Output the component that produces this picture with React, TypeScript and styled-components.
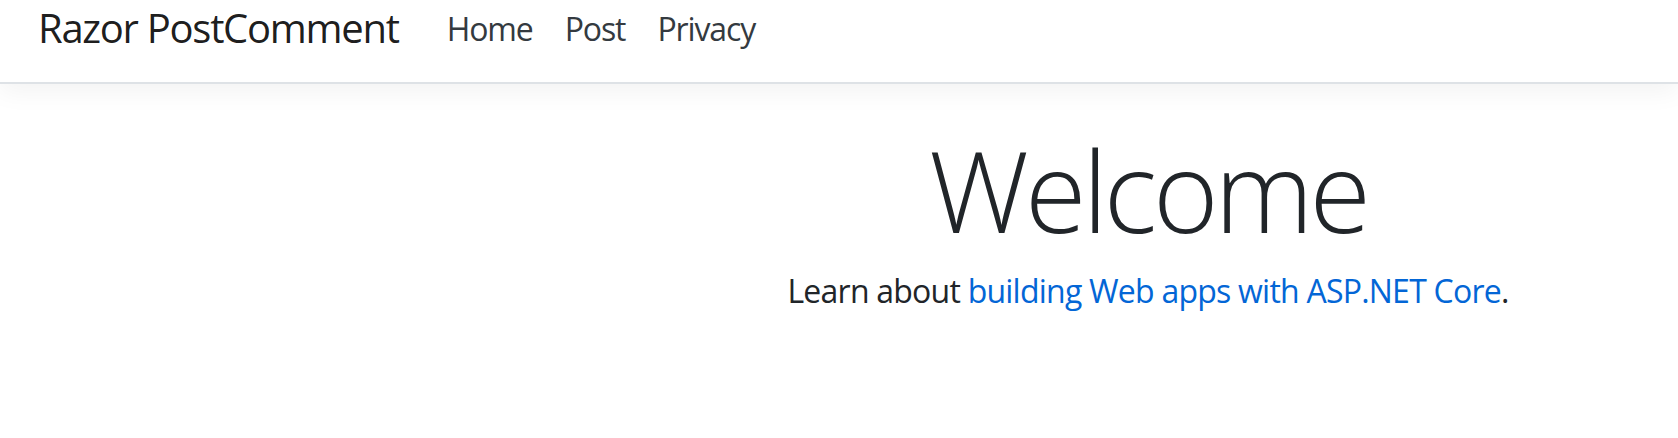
import styled, { createGlobalStyle } from "styled-components";

const GlobalStyle = createGlobalStyle`
  html, body {
    margin: 0;
    padding: 0;
    background: #ffffff;
    font-family: "Open Sans", "Noto Sans", Arial, sans-serif;
    color: #212529;
  }
  * {
    box-sizing: border-box;
  }
`;

const Header = styled.header`
  height: 84px;
  background: #ffffff;
  border-bottom: 2px solid #dee2e6;
  box-shadow: 0 8px 24px rgba(0, 0, 0, 0.05);
`;

const NavBar = styled.nav`
  display: flex;
  align-items: flex-start;
  padding-left: 38px;
`;

const Brand = styled.a`
  font-size: 40px;
  line-height: 56px;
  letter-spacing: -0.032em;
  color: rgba(0, 0, 0, 0.9);
  text-decoration: none;
  margin-right: 32px;
  white-space: nowrap;
`;

const NavList = styled.ul`
  display: flex;
  list-style: none;
  margin: 0;
  padding: 0;
`;

const NavLink = styled.a`
  display: block;
  font-size: 32px;
  line-height: 57px;
  letter-spacing: -0.035em;
  padding: 0 16px;
  color: #343a40;
  text-decoration: none;
`;

const Main = styled.main`
  padding-left: 618px;
`;

const Hero = styled.div`
  text-align: center;
  padding-top: 39px;
`;

const Title = styled.h1`
  margin: 0 0 10px;
  font-size: 112px;
  font-weight: 300;
  line-height: 1.2;
  letter-spacing: -0.036em;
  color: #212529;
`;

const Lead = styled.p`
  margin: 0;
  font-size: 32px;
  line-height: 48px;
  letter-spacing: -0.024em;
  color: #212529;
`;

const Link = styled.a`
  color: #0366d6;
  text-decoration: none;
`;

export default function App() {
  return (
    <>
      <GlobalStyle />
      <Header>
        <NavBar>
          <Brand href="#">Razor PostComment</Brand>
          <NavList>
            <li>
              <NavLink href="#">Home</NavLink>
            </li>
            <li>
              <NavLink href="#">Post</NavLink>
            </li>
            <li>
              <NavLink href="#">Privacy</NavLink>
            </li>
          </NavList>
        </NavBar>
      </Header>
      <Main>
        <Hero>
          <Title>Welcome</Title>
          <Lead>
            Learn about <Link href="#">building Web apps with ASP.NET Core</Link>.
          </Lead>
        </Hero>
      </Main>
    </>
  );
}
